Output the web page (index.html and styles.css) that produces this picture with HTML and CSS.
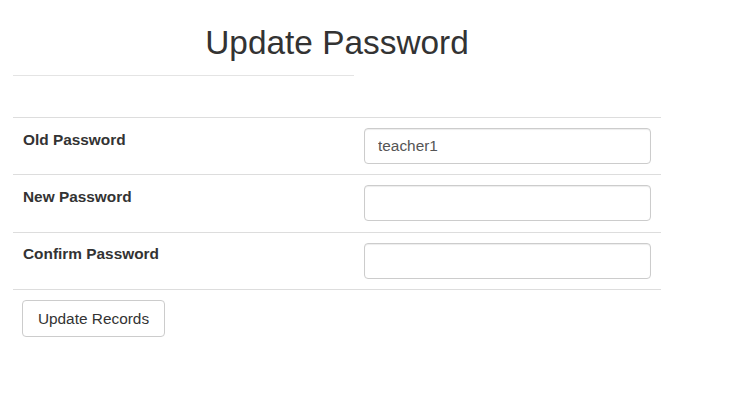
FILE: index.html
```html
<!DOCTYPE html>
<html>
<head>
<meta charset="utf-8">
<link rel="stylesheet" href="styles.css">
</head>
<body>
<div class="page">
  <h2 class="title">Update Password</h2>
  <hr class="rule">
  <table class="form-table">
    <tr>
      <td class="label">Old Password</td>
      <td class="field"><input class="control" type="text" value="teacher1"></td>
    </tr>
    <tr>
      <td class="label">New Password</td>
      <td class="field"><input class="control" type="password"></td>
    </tr>
    <tr>
      <td class="label">Confirm Password</td>
      <td class="field"><input class="control" type="password"></td>
    </tr>
    <tr>
      <td class="action" colspan="2"><button class="btn" type="button">Update Records</button></td>
    </tr>
  </table>
</div>
</body>
</html>
```

FILE: styles.css
```css
html, body {
  margin: 0;
  padding: 0;
  background: #fff;
}
body {
  font-family: "Liberation Sans", Arial, sans-serif;
  color: #333;
  font-size: 15.4px;
  line-height: 1.42857;
}
.page {
  width: 648px;
  margin-left: 13px;
}
.title {
  margin: 25px 0 0 0;
  font-size: 33.4px;
  font-weight: 400;
  line-height: 1.1;
  text-align: center;
  color: #333;
}
.rule {
  width: 341px;
  margin: 13.3px 0 0 0;
  border: 0;
  border-top: 1px solid #e4e4e4;
  height: 0;
}
.form-table {
  margin-top: 41px;
  width: 648px;
  border-collapse: collapse;
  border-spacing: 0;
}
.form-table td {
  border-top: 1px solid #dddddd;
  vertical-align: top;
  padding: 10px;
}
.label {
  width: 322px;
  font-weight: 700;
  padding-top: 10.5px !important;
}
.field {
  padding-left: 9px !important;
  padding-bottom: 10.33px !important;
}
.control {
  display: block;
  box-sizing: border-box;
  width: 287px;
  height: 36px;
  margin: 0;
  padding: 0 13px;
  font-family: "Liberation Sans", Arial, sans-serif;
  font-size: 15.4px;
  color: #555;
  background: #fff;
  border: 1px solid #cccccc;
  border-radius: 4px;
  box-shadow: inset 0 1px 1px rgba(0,0,0,0.075);
  outline: none;
}
.action {
  padding-left: 9px !important;
}
.btn {
  display: block;
  box-sizing: border-box;
  width: 143px;
  height: 37px;
  margin: 0;
  padding: 0;
  font-family: "Liberation Sans", Arial, sans-serif;
  font-size: 15.4px;
  color: #333;
  background: #fff;
  border: 1px solid #cccccc;
  border-radius: 4px;
}
```
